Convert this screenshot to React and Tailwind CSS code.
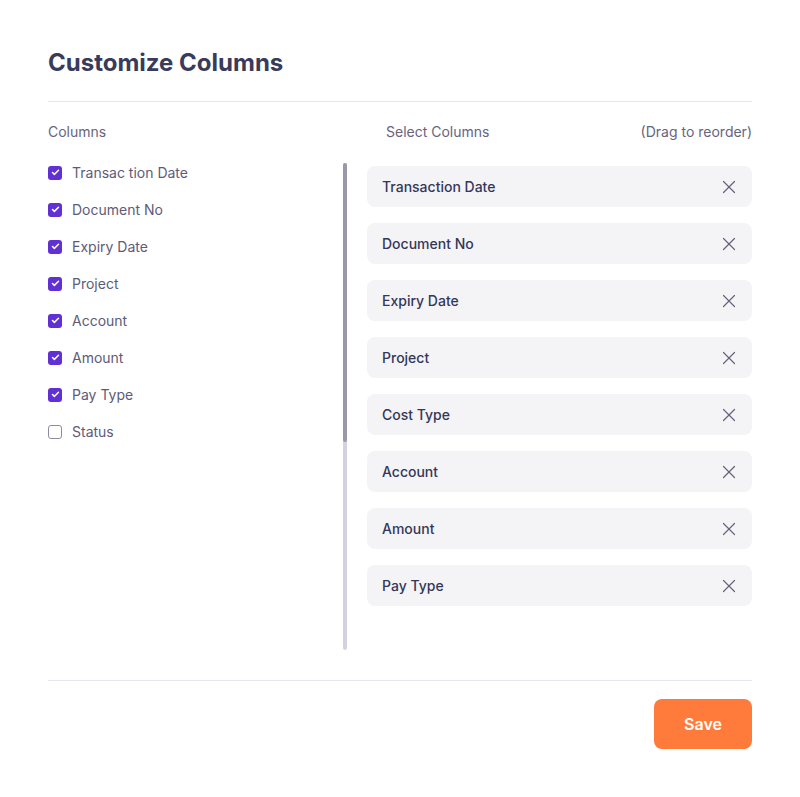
import {X, Check} from 'lucide-react'

const available = [
  {label: 'Transac tion Date', checked: true},
  {label: 'Document No', checked: true},
  {label: 'Expiry Date', checked: true},
  {label: 'Project', checked: true},
  {label: 'Account', checked: true},
  {label: 'Amount', checked: true},
  {label: 'Pay Type', checked: true},
  {label: 'Status', checked: false}
]

const selected = [
  'Transaction Date',
  'Document No',
  'Expiry Date',
  'Project',
  'Cost Type',
  'Account',
  'Amount',
  'Pay Type'
]

const CheckRow = ({label, checked}) => (
  <label className="flex items-center h-[37px] gap-[10px] text-[14px] text-[#5e5b78]">
    {checked ? (
      <span className="flex items-center justify-center w-[14px] h-[14px] rounded-[3px] bg-[#6030d4]">
        <Check className="w-[9px] h-[9px] text-white" strokeWidth={4} />
      </span>
    ) : (
      <span className="w-[14px] h-[14px] rounded-[3px] border border-[#8d8aa3] bg-white" />
    )}
    <span>{label}</span>
  </label>
)

export default function App() {
  return (
    <div
      className="w-[800px] h-[797px] bg-white px-12 pt-[47px]"
      style={{fontFamily: 'Inter, "Noto Sans", sans-serif'}}
    >
      <h1 className="text-[24px] leading-8 font-bold text-[#383b5b]">Customize Columns</h1>
      <div className="mt-[22px] border-t border-[#e7e6ec]" />

      <div className="flex items-center h-5 mt-[19px] text-[14px] text-[#67647e]">
        <div className="w-[338px]">Columns</div>
        <div className="flex-1 flex justify-between">
          <span>Select Columns</span>
          <span>(Drag to reorder)</span>
        </div>
      </div>

      <div className="flex mt-[22px] h-[487px]">
        <div className="w-[295px]">
          <div className="-mt-[9px] flex flex-col">
            {available.map(item => (
              <CheckRow key={item.label} {...item} />
            ))}
          </div>
        </div>
        <div className="w-[4px] h-full rounded-full bg-[#d4d2e2] flex flex-col">
          <div className="h-[279px] rounded-full bg-[#9b98ab]" />
        </div>
        <div className="flex-1 ml-5 pt-[3px] flex flex-col gap-4">
          {selected.map(name => (
            <div
              key={name}
              className="flex items-center justify-between h-[41px] pl-[15px] pr-[12px] rounded-[8px] bg-[#f4f4f6] text-[14px] font-medium text-[#34375a]"
            >
              <span>{name}</span>
              <X className="w-[22px] h-[22px] text-[#65627c]" strokeWidth={1.3} />
            </div>
          ))}
        </div>
      </div>

      <div className="mt-[30px] border-t border-[#e7e6ec]" />
      <div className="flex justify-end mt-[18px]">
        <button className="w-[98px] h-[50px] rounded-[8px] bg-[#ff7b3c] text-white text-[16px] font-semibold">
          Save
        </button>
      </div>
    </div>
  )
}
